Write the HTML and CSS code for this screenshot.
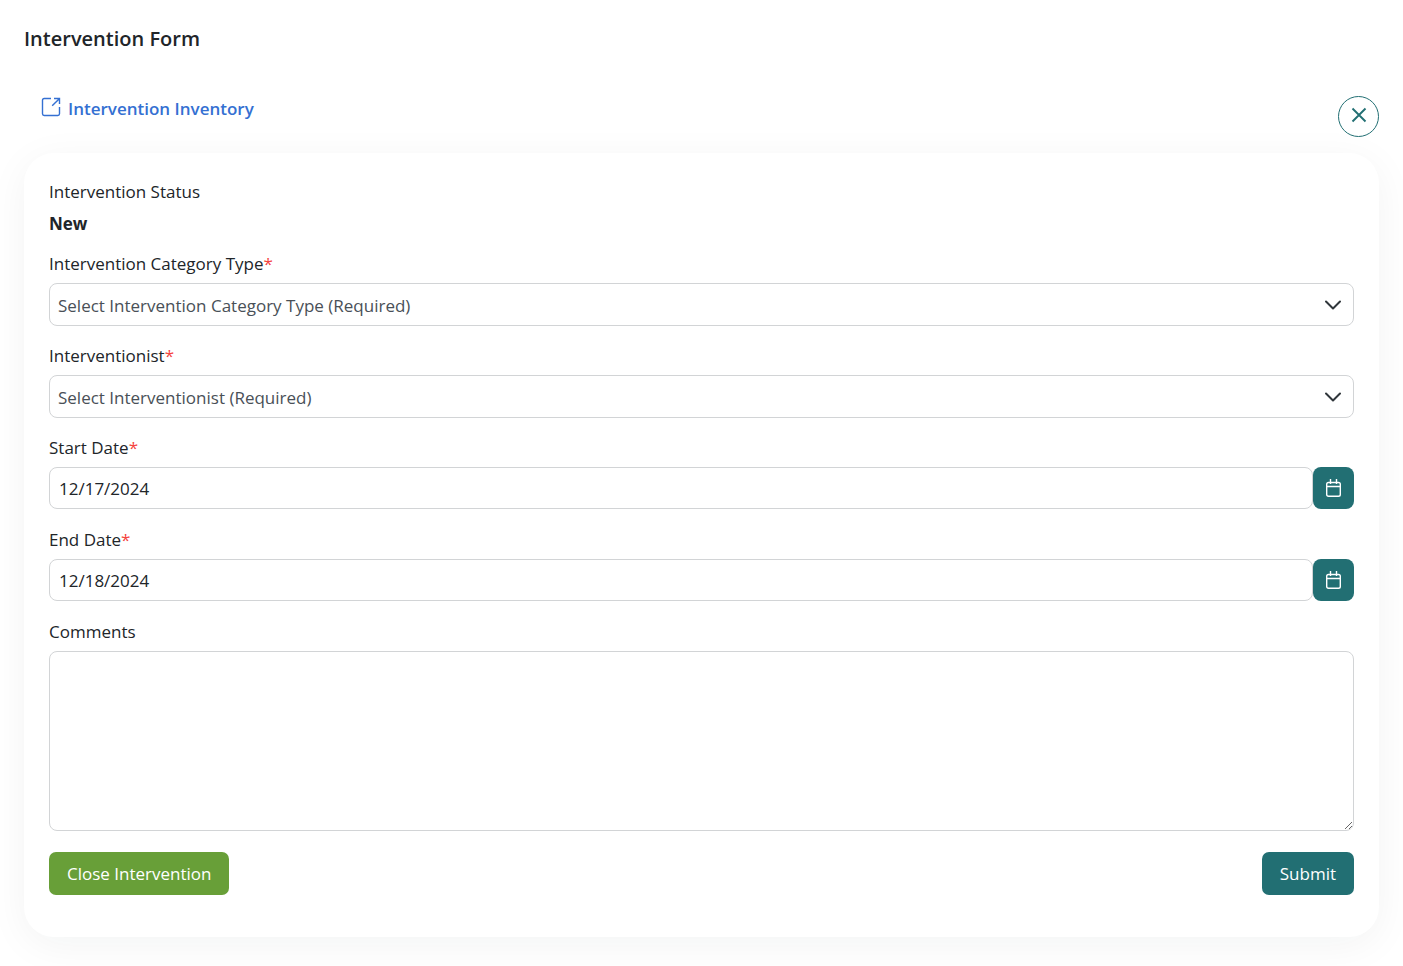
FILE: index.html
```html
<!DOCTYPE html>
<html lang="en">
<head>
<meta charset="utf-8">
<meta name="viewport" content="width=device-width, initial-scale=1">
<title>Intervention Form</title>
<link rel="stylesheet" href="styles.css">
</head>
<body>
<main class="page">
  <h1 class="page-title">Intervention Form</h1>
  <div class="toolbar">
    <a class="inventory-link" href="#">
      <svg class="link-icon" viewBox="0 0 20 20" aria-hidden="true"><path d="M10 1.500H3.200Q1.500 1.500 1.500 3.200V16.800Q1.500 18.500 3.200 18.500H16.800Q18.500 18.500 18.500 16.800V10M13 1.500H18.500V7M18.300 1.700L11.200 8.800"/></svg>
      <span>Intervention Inventory</span>
    </a>
    <button class="close-button" type="button" aria-label="Close">
      <svg class="close-icon" viewBox="0 0 16 16" aria-hidden="true"><path d="M1.500 1.500L14.500 14.500M14.500 1.500L1.500 14.500"/></svg>
    </button>
  </div>
  <form class="card">
    <div class="status">
      <div class="status-label">Intervention Status</div>
      <div class="status-value">New</div>
    </div>
    <div class="field">
      <label class="label" for="category">Intervention Category Type<span class="required">*</span></label>
      <div class="select-wrap">
        <select class="control select" id="category"><option>Select Intervention Category Type (Required)</option></select>
        <svg class="chevron" viewBox="0 0 16 10" aria-hidden="true"><path d="M1 1.500L8 8.500L15 1.500"/></svg>
      </div>
    </div>
    <div class="field">
      <label class="label" for="interventionist">Interventionist<span class="required">*</span></label>
      <div class="select-wrap">
        <select class="control select" id="interventionist"><option>Select Interventionist (Required)</option></select>
        <svg class="chevron" viewBox="0 0 16 10" aria-hidden="true"><path d="M1 1.500L8 8.500L15 1.500"/></svg>
      </div>
    </div>
    <div class="field">
      <label class="label" for="start">Start Date<span class="required">*</span></label>
      <div class="date-group">
        <input class="control date-input" id="start" type="text" value="12/17/2024">
        <button class="date-button" type="button" aria-label="Choose start date">
          <svg class="calendar" viewBox="0 0 15 18" aria-hidden="true"><path d="M2.500 3.500H12.500Q14.300 3.500 14.300 5.300V15.500Q14.300 17.300 12.500 17.300H2.500Q.7 17.300 .7 15.500V5.300Q.7 3.500 2.500 3.500ZM.7 7.500H14.300M4.500 0V5M10.500 0V5"/></svg>
        </button>
      </div>
    </div>
    <div class="field">
      <label class="label" for="end">End Date<span class="required">*</span></label>
      <div class="date-group">
        <input class="control date-input" id="end" type="text" value="12/18/2024">
        <button class="date-button" type="button" aria-label="Choose end date">
          <svg class="calendar" viewBox="0 0 15 18" aria-hidden="true"><path d="M2.500 3.500H12.500Q14.300 3.500 14.300 5.300V15.500Q14.300 17.300 12.500 17.300H2.500Q.7 17.300 .7 15.500V5.300Q.7 3.500 2.500 3.500ZM.7 7.500H14.300M4.500 0V5M10.500 0V5"/></svg>
        </button>
      </div>
    </div>
    <div class="field">
      <label class="label" for="comments">Comments</label>
      <textarea class="control comments" id="comments"></textarea>
    </div>
    <div class="actions">
      <button class="button button-close" type="button">Close Intervention</button>
      <button class="button button-submit" type="submit">Submit</button>
    </div>
  </form>
</main>
</body>
</html>
```
FILE: styles.css
```css
* { box-sizing: border-box; }

body {
  margin: 0;
  background: #fff;
  color: #212529;
  font: 17px/27px "Segoe UI", "Open Sans", "Noto Sans", sans-serif;
}

button, input, select, textarea { font: inherit; color: inherit; }

.page { padding: 24px 24px 29px; }

.page-title {
  margin: 0;
  font-size: 20px;
  line-height: 30px;
  font-weight: 600;
}

.toolbar {
  display: flex;
  justify-content: space-between;
  align-items: flex-start;
  padding: 42px 0 16px 17px;
}

.inventory-link {
  display: flex;
  align-items: center;
  gap: 7px;
  color: #3470d2;
  font-weight: 600;
  line-height: 25px;
  text-decoration: none;
}

.link-icon { width: 20px; height: 20px; margin-bottom: 4px; }

svg path { fill: none; stroke: currentColor; stroke-width: 1.4; }

.close-button {
  display: grid;
  place-items: center;
  width: 41px;
  height: 41px;
  padding: 0 0 4px;
  border: 1px solid #226f73;
  border-radius: 50%;
  background: #fff;
  color: #226f73;
}

.close-icon { width: 16px; height: 16px; }
.close-icon path { stroke-width: 1.9; }

.card {
  padding: 25px 25px 42px;
  border-radius: 30px;
  background: #fff;
  box-shadow: 0 8px 40px rgba(20, 40, 30, 0.05);
}

.status { margin-bottom: 13px; }
.status-value { margin-top: 5px; font-weight: 700; }

.field { margin-bottom: 16px; }

.label { display: block; margin-bottom: 6px; }
.required { color: #f5433d; }

.control {
  display: block;
  width: 100%;
  margin: 0;
  border: 1px solid #d2d4d6;
  border-radius: 8px;
  background: #fff;
}

.select-wrap { position: relative; }

.select {
  height: 43px;
  padding: 1px 48px 0 8px;
  color: #495057;
  appearance: none;
}

.chevron {
  position: absolute;
  top: 17px;
  right: 13px;
  width: 16px;
  height: 10px;
  color: #30363b;
  pointer-events: none;
}
.chevron path { stroke-width: 2; stroke-linecap: round; stroke-linejoin: round; }

.date-group { display: flex; height: 42px; margin-bottom: 17px; }
.date-input { flex: 1; min-width: 0; padding: 1px 9px 0; }

.date-button {
  display: grid;
  place-items: center;
  width: 41px;
  padding: 0;
  border: 0;
  border-radius: 8px;
  background: #226f73;
  color: #fff;
}

.calendar { width: 15px; height: 18px; }

.comments { height: 180px; padding: 8px; resize: vertical; }

.actions {
  display: flex;
  justify-content: space-between;
  padding-top: 5px;
}

.button {
  height: 43px;
  padding: 0 18px;
  border: 0;
  border-radius: 7px;
  color: #fff;
}

.button-close { background: #689f38; }
.button-submit { background: #226f73; }
```
